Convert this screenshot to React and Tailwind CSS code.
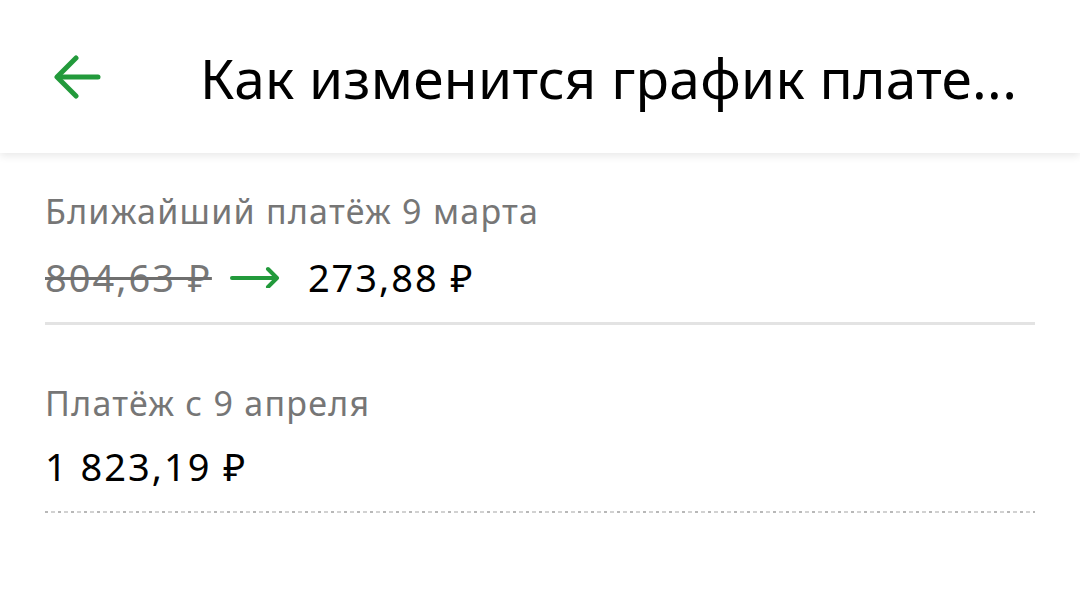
export default function App() {
  return (
    <div className="min-h-screen bg-white" style={{ fontFamily: '"Noto Sans", "Open Sans", sans-serif' }}>
      {/* Header */}
      <div className="relative z-10 h-[153px] bg-white flex items-center shadow-[0_3px_8px_rgba(0,0,0,0.09)]">
        <div className="w-[200px] pl-[54px] flex items-center">
          <svg width="48" height="44" viewBox="0 0 48 44" fill="none" stroke="#229a3b" strokeWidth="5" strokeLinecap="round" strokeLinejoin="round">
            <path d="M44 22H4" />
            <path d="M22 3L3 22l19 19" />
          </svg>
        </div>
        <h1 className="text-[55px] leading-none text-black tracking-[0.3px] pt-[2px]">Как изменится график плате...</h1>
      </div>

      {/* Content */}
      <div className="px-[45px] pt-[36px]">
        <div className="text-[34px] leading-[44px] tracking-[1.25px] text-[#767676]">Ближайший платёж 9 марта</div>
        <div className="mt-[21px] flex items-center text-[38px] leading-[46px] tracking-[2px]">
          <span className="text-[#777777] line-through decoration-[3px] decoration-[#6f6f6f]">804,63 ₽</span>
          <svg className="ml-[18px] mr-[28px]" width="50" height="22" viewBox="0 0 50 22" fill="none" stroke="#229a3b" strokeWidth="4" strokeLinecap="round" strokeLinejoin="round">
            <path d="M2 12H46" />
            <path d="M38 3l9 9-9 9" />
          </svg>
          <span className="text-black">273,88 ₽</span>
        </div>
        <div className="mt-[22px] h-[3px] w-[990px] bg-[#e3e3e3]" />

        <div className="mt-[56px] text-[34px] leading-[44px] tracking-[1.25px] text-[#767676]">Платёж с 9 апреля</div>
        <div className="mt-[18px] text-[38px] leading-[46px] tracking-[2px] text-black">1 823,19 ₽</div>
        <div className="mt-[22px] h-[2px] w-[990px] bg-[repeating-linear-gradient(90deg,#b8b8b8_0_3px,transparent_3px_6px,#d2d2d2_6px_10px,transparent_10px_13px)]" />
      </div>
    </div>
  );
}
